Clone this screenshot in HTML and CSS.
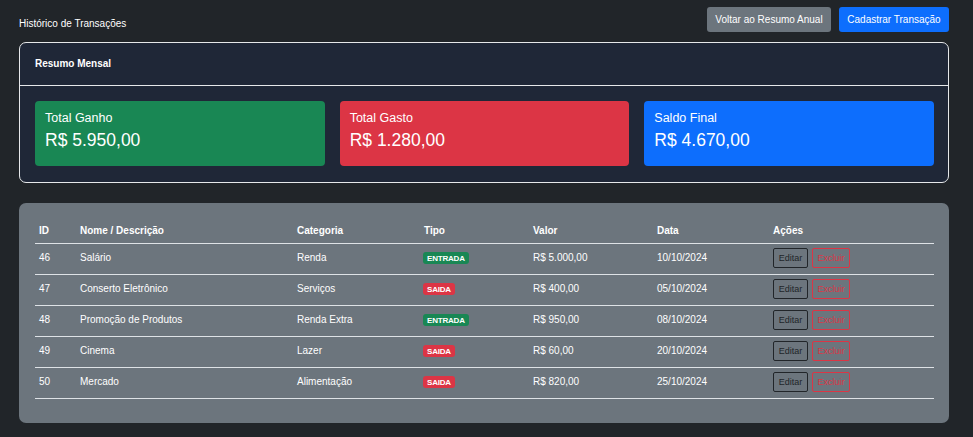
FILE: index.html
```html
<!DOCTYPE html>
<html lang="pt-BR">
<head>
<meta charset="utf-8">
<title>Histórico de Transações</title>
<link rel="stylesheet" href="styles.css">
</head>
<body>
<div class="page">
  <header class="topbar">
    <h1 class="title">Histórico de Transações</h1>
    <div class="actions">
      <button class="btn btn-grey">Voltar ao Resumo Anual</button>
      <button class="btn btn-blue">Cadastrar Transação</button>
    </div>
  </header>

  <section class="summary">
    <div class="summary-head">Resumo Mensal</div>
    <div class="summary-body">
      <div class="stat stat-green">
        <div class="stat-label">Total Ganho</div>
        <div class="stat-value">R$ 5.950,00</div>
      </div>
      <div class="stat stat-red">
        <div class="stat-label">Total Gasto</div>
        <div class="stat-value">R$ 1.280,00</div>
      </div>
      <div class="stat stat-blue">
        <div class="stat-label">Saldo Final</div>
        <div class="stat-value">R$ 4.670,00</div>
      </div>
    </div>
  </section>

  <section class="table-card">
    <table class="tx">
      <colgroup>
        <col class="c-id"><col class="c-nome"><col class="c-cat"><col class="c-tipo"><col class="c-val"><col class="c-data"><col class="c-acoes">
      </colgroup>
      <thead>
        <tr><th>ID</th><th>Nome / Descrição</th><th>Categoria</th><th>Tipo</th><th>Valor</th><th>Data</th><th>Ações</th></tr>
      </thead>
      <tbody>
        <tr><td>46</td><td>Salário</td><td>Renda</td><td><span class="badge badge-in">ENTRADA</span></td><td>R$ 5.000,00</td><td>10/10/2024</td><td><button class="sbtn sbtn-edit">Editar</button><button class="sbtn sbtn-del">Excluir</button></td></tr>
        <tr><td>47</td><td>Conserto Eletrônico</td><td>Serviços</td><td><span class="badge badge-out">SAIDA</span></td><td>R$ 400,00</td><td>05/10/2024</td><td><button class="sbtn sbtn-edit">Editar</button><button class="sbtn sbtn-del">Excluir</button></td></tr>
        <tr><td>48</td><td>Promoção de Produtos</td><td>Renda Extra</td><td><span class="badge badge-in">ENTRADA</span></td><td>R$ 950,00</td><td>08/10/2024</td><td><button class="sbtn sbtn-edit">Editar</button><button class="sbtn sbtn-del">Excluir</button></td></tr>
        <tr><td>49</td><td>Cinema</td><td>Lazer</td><td><span class="badge badge-out">SAIDA</span></td><td>R$ 60,00</td><td>20/10/2024</td><td><button class="sbtn sbtn-edit">Editar</button><button class="sbtn sbtn-del">Excluir</button></td></tr>
        <tr><td>50</td><td>Mercado</td><td>Alimentação</td><td><span class="badge badge-out">SAIDA</span></td><td>R$ 820,00</td><td>25/10/2024</td><td><button class="sbtn sbtn-edit">Editar</button><button class="sbtn sbtn-del">Excluir</button></td></tr>
      </tbody>
    </table>
  </section>
</div>
</body>
</html>
```

FILE: styles.css
```css
* { box-sizing: border-box; }
html, body { margin: 0; padding: 0; }
body {
  background: #212529;
  color: #fff;
  font-family: "Liberation Sans", Arial, sans-serif;
  font-size: 10px;
}
.page {
  padding: 7px 24px 14px 19px;
}
.topbar {
  display: flex;
  justify-content: space-between;
  align-items: center;
  height: 25px;
}
.title {
  margin: 0;
  padding-top: 7px;
  font-size: 10px;
  font-weight: normal;
  color: #fff;
}
.actions {
  display: flex;
  gap: 8px;
}
.btn {
  font-family: inherit;
  font-size: 10px;
  color: #fff;
  border: none;
  border-radius: 3px;
  height: 25px;
  padding: 0 8px;
  cursor: pointer;
}
.btn-grey { background: #6c757d; width: 124px; }
.btn-blue { background: #0d6efd; width: 110px; }

.summary {
  margin-top: 10px;
  border: 1px solid #e6e8ea;
  border-radius: 7px;
  background: #1f2737;
}
.summary-head {
  height: 43px;
  display: flex;
  align-items: center;
  padding: 0 15px 1px;
  font-weight: bold;
  font-size: 10px;
  border-bottom: 1px solid #e6e8ea;
}
.summary-body {
  display: grid;
  grid-template-columns: 1fr 1fr 1fr;
  gap: 15px;
  padding: 15px 14px 16px 15px;
}
.stat {
  height: 65px;
  border-radius: 4px;
  padding: 10px 10px;
  color: #fff;
}
.stat-green { background: #198754; }
.stat-red { background: #dc3545; }
.stat-blue { background: #0d6efd; }
.stat-label { font-size: 12.5px; line-height: 15px; }
.stat-value { font-size: 17.5px; line-height: 20px; margin-top: 4px; }

.table-card {
  margin-top: 20px;
  background: #6c757d;
  border-radius: 7px;
  padding: 16px 15px 24px 16px;
}
.tx {
  width: 100%;
  border-collapse: collapse;
  table-layout: fixed;
  color: #fff;
}
.c-id { width: 41px; }
.c-nome { width: 217px; }
.c-cat { width: 127px; }
.c-tipo { width: 109px; }
.c-val { width: 124px; }
.c-data { width: 116px; }
.c-acoes { width: auto; }
.tx th {
  text-align: left;
  font-weight: bold;
  font-size: 10px;
  height: 24px;
  padding: 0 4px 1px;
  border-bottom: 1px solid #dee2e6;
}
.tx td {
  font-size: 10px;
  height: 31px;
  padding: 0 4px 2px;
  border-bottom: 1px solid #dee2e6;
  vertical-align: middle;
}
.tx td:nth-child(4) { padding-left: 3px; }
.badge {
  display: inline-block;
  font-size: 8px;
  font-weight: bold;
  padding: 2px 4px 1px;
  line-height: 9px;
  border-radius: 3px;
  color: #fff;
  letter-spacing: -0.2px;
}
.badge-in { background: #198754; }
.badge-out { background: #dc3545; }
.sbtn {
  font-family: inherit;
  font-size: 9px;
  background: transparent;
  height: 20px;
  border-radius: 2px;
  padding: 0 3px;
  margin-right: 4px;
  cursor: pointer;
  vertical-align: middle;
}
.sbtn-edit { border: 1px solid #212529; color: #212529; width: 35px; }
.sbtn-del { border: 1px solid #dc3545; color: #dc3545; width: 38px; }
```
